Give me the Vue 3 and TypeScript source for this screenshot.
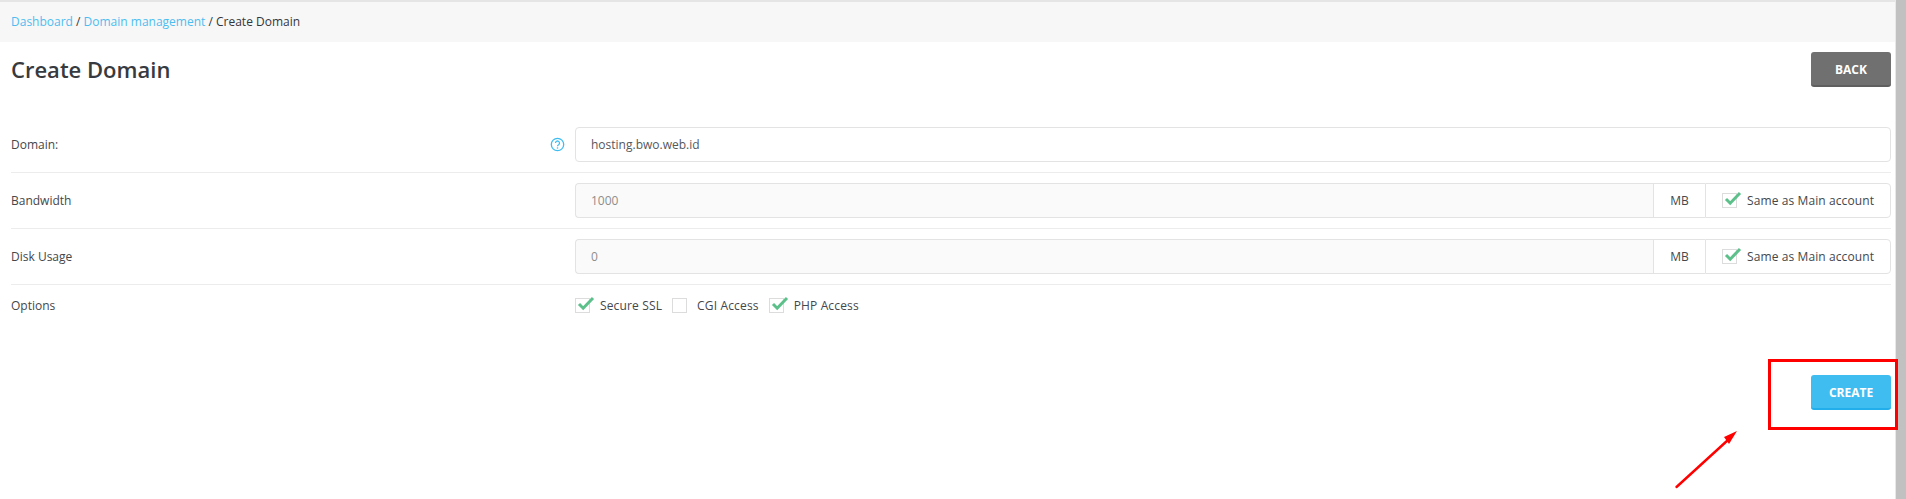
<template>
  <div class="page">
    <main class="content">
      <nav class="crumbs">
        <a>Dashboard</a> / <a>Domain management</a> / <span>Create Domain</span>
      </nav>

      <div class="wrap">
        <header class="head">
          <h1>Create Domain</h1>
          <button class="btn btn-back">BACK</button>
        </header>

        <form class="form" @submit.prevent>
          <div class="row">
            <label>Domain:</label>
            <span class="help">
              <svg width="15" height="15" viewBox="0 0 15 15">
                <circle cx="7.5" cy="7.5" r="6.2" fill="none" stroke="#3fbdf0" stroke-width="1.3" />
                <path d="M5.5 6a2 2 0 1 1 3.1 1.7c-.7.4-1.1.8-1.1 1.5" fill="none" stroke="#3fbdf0" stroke-width="1.3" />
                <circle cx="7.5" cy="11" r=".8" fill="#3fbdf0" />
              </svg>
            </span>
            <div class="field">
              <input class="input" type="text" value="hosting.bwo.web.id" />
            </div>
          </div>

          <div v-for="q in quotas" :key="q.label" class="row">
            <label>{{ q.label }}</label>
            <div class="field group">
              <input class="input" type="text" :value="q.value" disabled />
              <span class="addon unit">MB</span>
              <span class="addon same">
                <span class="check">
                  <svg width="20" height="18" viewBox="0 0 20 18"><path d="M3 9l4.2 4.2L17 3" fill="none" stroke="#5cc08a" stroke-width="3" /></svg>
                </span>
                Same as Main account
              </span>
            </div>
          </div>

          <div class="row row-options">
            <label>Options</label>
            <div class="field opts">
              <span v-for="o in options" :key="o.label" class="opt">
                <span class="check">
                  <svg v-if="o.on" width="20" height="18" viewBox="0 0 20 18"><path d="M3 9l4.2 4.2L17 3" fill="none" stroke="#5cc08a" stroke-width="3" /></svg>
                </span>
                {{ o.label }}
              </span>
            </div>
          </div>

          <div class="actions">
            <button class="btn btn-create">CREATE</button>
          </div>
        </form>
      </div>
    </main>
    <div class="scrollbar"></div>

    <!-- annotation drawn over the screenshot -->
    <div class="mark-box"></div>
    <svg class="mark-arrow" width="70" height="66" viewBox="0 0 70 66">
      <path d="M2.5 61L54 14" stroke="#f00" stroke-width="2.4" stroke-linecap="round" />
      <path d="M63 5L50 11L55 18Z" fill="#f00" />
    </svg>
  </div>
</template>

<script setup lang="ts">
  const quotas = [
    { label: "Bandwidth", value: "1000" },
    { label: "Disk Usage", value: "0" },
  ]

  const options = [
    { label: "Secure SSL", on: true },
    { label: "CGI Access", on: false },
    { label: "PHP Access", on: true },
  ]
</script>

<style>
  html,
  body {
    margin: 0;
    background: #fff;
    overflow: hidden;
  }
</style>

<style scoped>
  .page {
    position: relative;
    display: flex;
    width: 1906px;
    height: 499px;
    overflow: hidden;
    font-family: "Open Sans", sans-serif;
    font-size: 12px;
    color: #3f4246;
    background: #fff;
  }
  .content {
    width: 1895px;
    border-top: 2px solid #e5e5e5;
    box-sizing: border-box;
  }
  .scrollbar {
    width: 11px;
    background: #c1c1c1;
    border-left: 1px solid #e8e8e8;
    box-sizing: border-box;
  }

  .crumbs {
    height: 40px;
    line-height: 40px;
    padding-left: 11px;
    background: #f7f7f7;
    color: #33363a;
  }
  .crumbs a {
    color: #4dbdf0;
  }

  .wrap {
    padding: 10px 4px 0 11px;
  }
  .head {
    display: flex;
    align-items: flex-start;
    justify-content: space-between;
    height: 65px;
  }
  .head h1 {
    margin: 0;
    font-size: 22px;
    font-weight: 600;
    line-height: 35px;
    color: #373a3f;
  }

  .btn {
    width: 80px;
    height: 35px;
    padding: 2px 0 0;
    border: 0;
    border-radius: 3px;
    color: #fff;
    font-family: inherit;
    font-size: 12px;
    font-weight: 700;
  }
  .btn-back {
    background: #6f706f;
    border-bottom: 2px solid #5e5f5e;
  }
  .btn-create {
    background: #3fbdf0;
    border-bottom: 2px solid #22aeea;
  }

  .row {
    position: relative;
    display: flex;
    align-items: center;
    height: 55px;
    border-bottom: 1px solid #ececec;
  }
  .row label {
    width: 564px;
    color: #44474b;
  }
  .help {
    position: absolute;
    left: 539px;
    top: 20px;
    height: 15px;
  }
  .field {
    flex: 1;
    display: flex;
  }
  .input {
    flex: 1;
    min-width: 0;
    height: 35px;
    box-sizing: border-box;
    padding: 0 15px;
    border: 1px solid #e3e3e3;
    border-radius: 4px;
    outline: none;
    background: #fff;
    font-family: inherit;
    font-size: 12px;
    color: #55585c;
  }
  .input:disabled {
    background: #fafafa;
    color: #8d8d8d;
    border-radius: 4px 0 0 4px;
    border-right: 0;
  }
  .addon {
    display: flex;
    align-items: center;
    height: 35px;
    box-sizing: border-box;
    border: 1px solid #e3e3e3;
    color: #44474b;
  }
  .unit {
    width: 52px;
    justify-content: center;
    border-right: 0;
  }
  .same {
    width: 186px;
    padding-left: 16px;
    gap: 10px;
    letter-spacing: 0.1px;
    border-radius: 0 4px 4px 0;
  }

  .check {
    position: relative;
    flex: none;
    display: inline-block;
    width: 15px;
    height: 15px;
    box-sizing: border-box;
    border: 1px solid #dcdcdc;
  }
  .check svg {
    position: absolute;
    left: 0;
    top: -4px;
  }

  .row-options {
    height: auto;
    padding-top: 13px;
    border-bottom: 0;
    align-items: flex-start;
  }
  .row-options label {
    line-height: 15px;
  }
  .opts {
    gap: 10px;
  }
  .opt {
    display: flex;
    align-items: center;
    gap: 10px;
    line-height: 15px;
    letter-spacing: 0.15px;
    color: #44474b;
  }

  .actions {
    display: flex;
    justify-content: flex-end;
    padding-top: 62px;
  }

  .mark-box {
    position: absolute;
    left: 1768px;
    top: 359px;
    width: 130px;
    height: 71px;
    box-sizing: border-box;
    border: 3px solid #f00;
  }
  .mark-arrow {
    position: absolute;
    left: 1674px;
    top: 426px;
  }
</style>
